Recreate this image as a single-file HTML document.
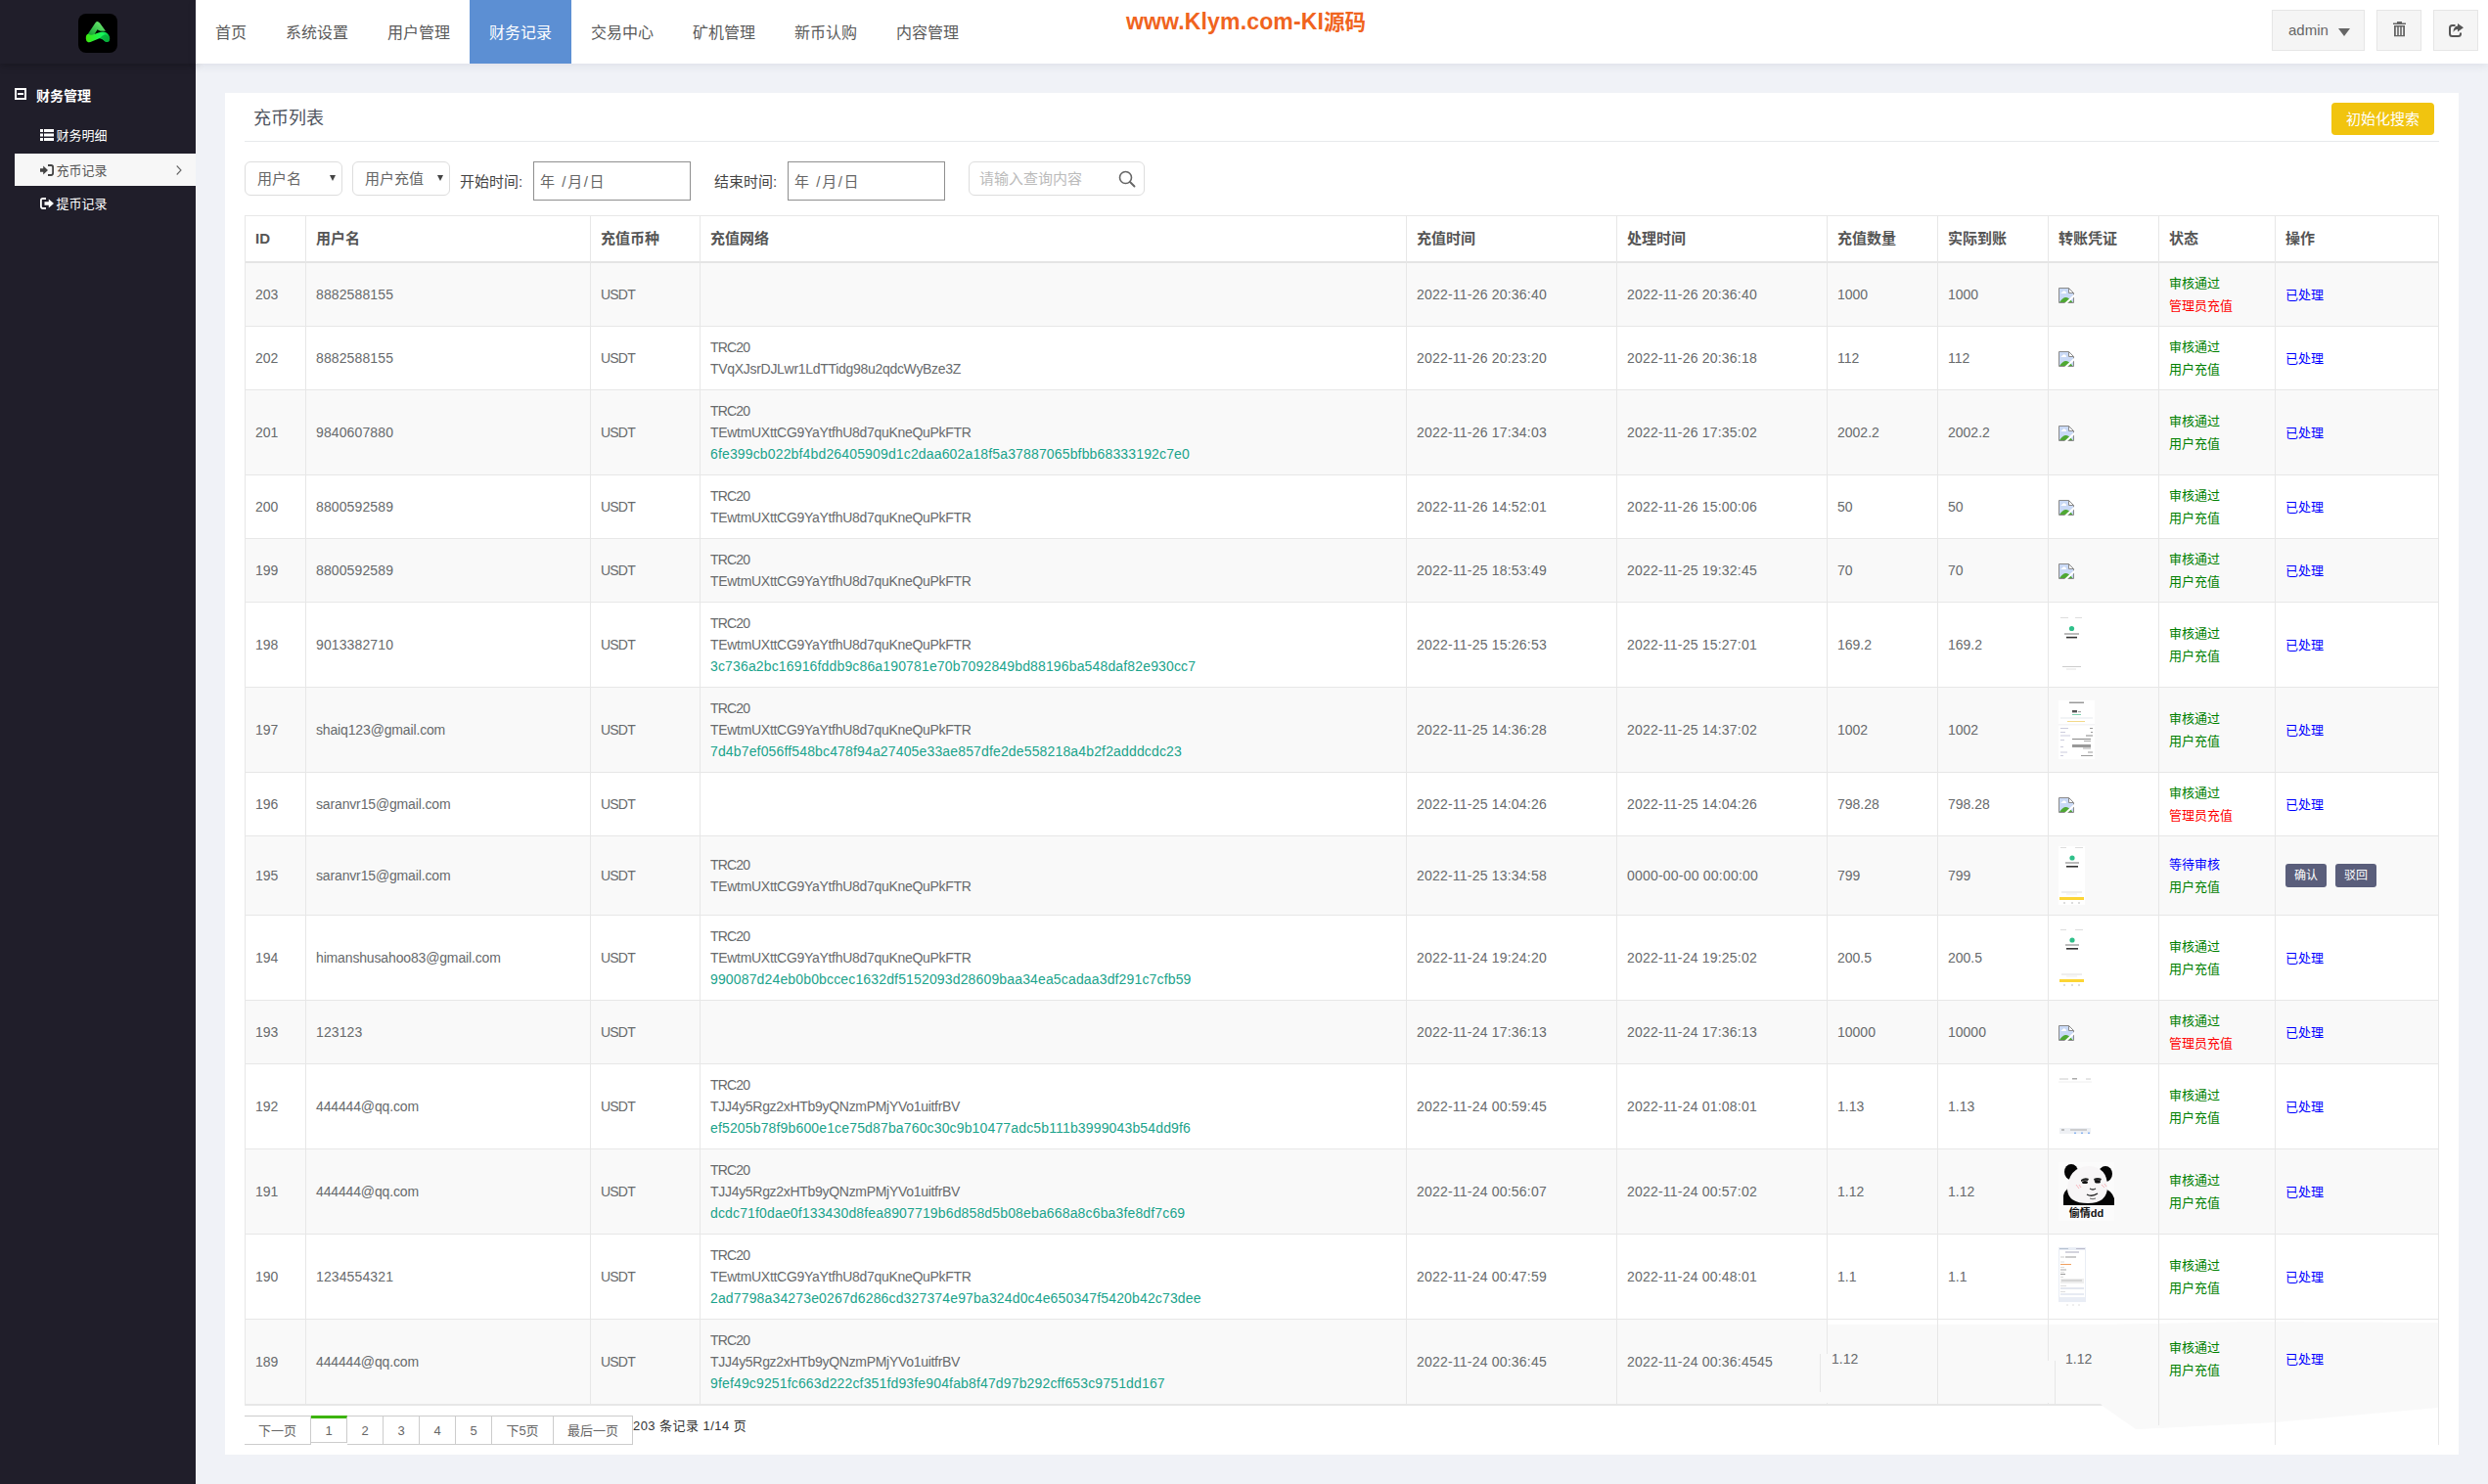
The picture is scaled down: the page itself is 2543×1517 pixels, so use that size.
<!DOCTYPE html>
<html lang="zh-CN">
<head>
<meta charset="utf-8">
<title>充币列表</title>
<style>
*{box-sizing:border-box;}
html,body{margin:0;padding:0;}
body{width:2543px;height:1517px;overflow:hidden;position:relative;background:#f0f2f7;font-family:"Liberation Sans","Noto Sans CJK SC",sans-serif;font-size:14px;color:#676a6c;}
a{text-decoration:none;color:inherit;}
#side{position:absolute;left:0;top:0;width:200px;height:1517px;background:#201e2a;}
#sidetop{position:absolute;left:0;top:0;width:200px;height:65px;background:#201e2a;box-shadow:0 2px 8px rgba(0,0,0,.25);}
#logo{position:absolute;left:80px;top:14px;width:40px;height:40px;border-radius:8px;background:#000;overflow:hidden;}
#head{position:absolute;left:200px;top:0;width:2343px;height:65px;background:#fff;box-shadow:0 2px 9px rgba(60,70,100,.10);}
#nav{position:absolute;left:0;top:0;height:65px;display:flex;}
#nav a{display:block;height:65px;line-height:68px;padding:0 20px;font-size:16px;color:#5a5a5a;white-space:nowrap;}
#nav a.on{background:#5c8fd3;color:#fff;}
#wm{position:absolute;left:951px;top:9px;font-size:21.5px;font-weight:bold;color:#f0641e;white-space:nowrap;line-height:26px;}
#wm span{font-size:23px;letter-spacing:.15px;}
.hb{position:absolute;top:10px;height:42px;background:#f5f5f5;border:1px solid #e6e6e6;}
#hb1{left:2122px;width:95px;}
#hb1 span{position:absolute;left:16px;top:0;line-height:39px;font-size:15px;color:#666;}
#hb1 i{position:absolute;left:67px;top:18px;width:0;height:0;border-left:6px solid transparent;border-right:6px solid transparent;border-top:8px solid #666;}
#hb2{left:2229px;width:46px;}
#hb3{left:2287px;width:46px;}
.hb svg{position:absolute;}
/* sidebar menu */
#mh{position:absolute;left:0;top:80px;width:200px;height:35px;color:#fff;font-weight:bold;font-size:14px;line-height:35px;}
#mh i{position:absolute;left:15px;top:10px;width:12px;height:12px;border:2px solid #fff;}
#mh i:after{content:"";position:absolute;left:1px;top:3px;width:6px;height:2px;background:#fff;}
#mh span{position:absolute;left:37px;top:1px;}
.mi{position:absolute;left:15px;width:185px;height:33px;color:#fff;font-size:13px;line-height:33px;}
.mi span{position:absolute;left:42.5px;top:1px;}
.mi svg{position:absolute;left:26px;top:11px;}
.mi.on{background:#f7f7f7;color:#555;}
/* panel */
#panel{position:absolute;left:230px;top:95px;width:2283px;height:1392px;background:#fff;}
#ttl{position:absolute;left:29px;top:11px;font-size:18px;line-height:30px;color:#4f5560;}
#hr{position:absolute;left:20px;top:49px;width:2243px;height:1px;background:#e7eaec;}
#ybtn{position:absolute;left:2153px;top:10px;width:105px;height:33px;border-radius:4px;background:#f1c40f;color:#fff;font-size:15px;line-height:34px;text-align:center;}
.sel{position:absolute;top:70px;width:100px;height:35px;border:1px solid #ddd;border-radius:6px;background:#fff;font-size:15px;color:#666;line-height:33px;padding-left:12px;}
.sel i{position:absolute;right:6px;top:13px;width:0;height:0;border-left:3px solid transparent;border-right:3px solid transparent;border-top:6px solid #444;}
.lbl{position:absolute;top:76px;font-size:15px;line-height:30px;color:#444;white-space:nowrap;}
.dt{position:absolute;top:70px;width:161px;height:40px;border:1px solid #8f8f8f;background:#fff;font-size:15px;color:#666;line-height:40px;padding-left:6px;white-space:pre;letter-spacing:1.6px;}
#sch{position:absolute;left:760px;top:70px;width:180px;height:35px;border:1px solid #ddd;border-radius:6px;background:#fff;font-size:15px;color:#bbb;line-height:33px;padding-left:10px;}
#sch svg{position:absolute;left:152px;top:8px;}
/* table */
#tb{position:absolute;left:20px;top:125px;width:2243px;border-collapse:separate;border-spacing:0;table-layout:fixed;border-left:1px solid #e7e7e7;border-top:1px solid #e7e7e7;}
#tb th,#tb td{border-right:1px solid #e7e7e7;border-bottom:1px solid #e7e7e7;padding:0 10px;text-align:left;vertical-align:middle;line-height:22px;overflow:hidden;white-space:nowrap;}
#tb th{height:48px;border-bottom:2px solid #e4e4e4;font-size:15px;font-weight:bold;color:#555;}
#tb td{font-size:14px;color:#676a6c;}
#tb td.tm{letter-spacing:.21px;}
#tb td.cn{letter-spacing:-.8px;}
#tb td.ud{letter-spacing:.12px;}
#tb td.ue{letter-spacing:-.15px;}
.ad{letter-spacing:-.3px;}
.tr{letter-spacing:-.8px;}
#tb tr:nth-child(odd) td{background:#f9f9f9;}
#tb tr.last td{border-bottom:2px solid #e7e7e7;}
#tb tr.last td.up>*{position:relative;top:-3px;}
.hs{color:#1aa38b;letter-spacing:.15px;}
.g{color:#008000;font-size:13px;}
.r{color:#ff0000;font-size:13px;}
.b{color:#0000ff;font-size:13px;}
.bk{display:block;margin-top:2px;}
.th{display:block;}
.sb{display:inline-block;width:42px;height:24px;border-radius:3px;background:#5a5e7b;color:#fff;font-size:12px;line-height:24px;text-align:center;vertical-align:middle;}
.sb2{margin-left:9px;}
/* pager */
#pg{position:absolute;left:20px;top:1352px;height:30px;display:flex;font-size:13px;color:#666;}
#pg a{display:block;height:30px;border:1px solid #ccc;border-left:none;line-height:30px;text-align:center;}
#pg a.cur{height:28px;border-top:3px solid #3cb40a;line-height:26px;}
#pg span{line-height:22px;color:#333;margin-left:0;letter-spacing:.45px;white-space:nowrap;font-size:13px;}
</style>
</head>
<body>
<div id="side">
  <div id="mh"><i></i><span>财务管理</span></div>
  <a class="mi" style="top:121px"><svg width="14" height="12" viewBox="0 0 14 12"><path fill="#fff" d="M0 0h3v3H0zM4 0h10v3H4zM0 4.5h3v3H0zM4 4.5h10v3H4zM0 9h3v3H0zM4 9h10v3H4z"/></svg><span>财务明细</span></a>
  <a class="mi on" style="top:157px"><svg width="14" height="12" viewBox="0 0 14 12"><path fill="#444" d="M0 4.200h3.200V1.600L8 6L3.200 10.400V7.800H0z"/><path fill="none" stroke="#444" stroke-width="1.8" d="M8 1h3.2q1.9 0 1.9 1.9v6.2q0 1.9-1.9 1.9H8"/></svg><span>充币记录</span><svg style="left:165px;top:12px" width="6" height="10" viewBox="0 0 6 10"><path d="M0.7 0.5L5 5L0.7 9.5" fill="none" stroke="#666" stroke-width="1.1"/></svg></a>
  <a class="mi" style="top:191px"><svg width="14" height="12" viewBox="0 0 14 12"><path fill="none" stroke="#fff" stroke-width="1.8" d="M6 1H2.8Q.9 1 .9 2.9v6.2Q.9 11 2.8 11H6"/><path fill="#fff" d="M4.500 4.200h4.300V1.600L14 6L8.800 10.400V7.800H4.500z"/></svg><span>提币记录</span></a>
</div>
<div id="sidetop">
  <div id="logo"><svg width="40" height="40" viewBox="0 0 40 40"><defs><linearGradient id="lg1" x1="0" y1="1" x2="1" y2="0"><stop offset="0" stop-color="#0a9a2c"/><stop offset="1" stop-color="#7bf57a"/></linearGradient><linearGradient id="lg2" x1="0" y1="0" x2="1" y2="0"><stop offset="0" stop-color="#3ee60c"/><stop offset=".7" stop-color="#16f55e"/><stop offset="1" stop-color="#06b83c"/></linearGradient></defs><path d="M9 22L17.5 9.300Q19.500 6.500 22 9.500L28 17.800H22.500L19.500 16.200L16 22Z" fill="url(#lg1)"/><path d="M7.800 25.400Q7.600 21.500 10 20.800Q12.500 22 15 21.500Q19 20 23 18.800Q26.500 18 28.500 19.300Q32 21.500 32.200 25.500Q32 29 29 29Q27 28.500 25.600 26.800Q23.500 24.800 21.500 25.200Q18 26.500 14.200 28.300Q11.500 29.600 9.800 29Q7.900 28 7.800 25.400Z" fill="url(#lg2)"/><path d="M22 25.100Q25 21 28 21.500Q31 22.500 32.200 25.500Q32 29 29 29Q27 28.500 25.600 26.800Q23.500 24.800 22 25.100Z" fill="#05a536" opacity=".75"/></svg></div>
</div>
<div id="head">
  <div id="nav"><a>首页</a><a>系统设置</a><a>用户管理</a><a class="on">财务记录</a><a>交易中心</a><a>矿机管理</a><a>新币认购</a><a>内容管理</a></div>
  <div id="wm"><span>www.Klym.com-KI</span>源码</div>
  <div class="hb" id="hb1"><span>admin</span><i></i></div>
  <div class="hb" id="hb2"><svg style="left:16px;top:11px" width="13" height="16" viewBox="0 0 13 16"><path fill="#666" d="M4 0h5v1.500h4V3H0V1.500h4zM1 4h11v11.300H1zM2.800 5.500v8.500h1.400V5.500zM5.800 5.500v8.500h1.400V5.500zM8.800 5.500v8.500h1.400V5.500z" fill-rule="evenodd"/></svg></div>
  <div class="hb" id="hb3"><svg style="left:15px;top:13px" width="15" height="14" viewBox="0 0 15 14"><path fill="none" stroke="#555" stroke-width="2" d="M6.500 2H3.500Q1 2 1 4.500v6Q1 13 3.500 13h6Q12 13 12 10.500V9.500"/><path fill="#555" d="M9 0l6 4.200L9 8.500V6Q6 6 4.500 9Q4.500 3 9 2.500z"/></svg></div>
</div>
<div id="panel">
  <div id="ttl">充币列表</div>
  <div id="ybtn">初始化搜索</div>
  <div id="hr"></div>
  <div class="sel" style="left:20px">用户名<i></i></div>
  <div class="sel" style="left:130px">用户充值<i></i></div>
  <div class="lbl" style="left:240px">开始时间:</div>
  <div class="dt" style="left:315px">年 /月/日</div>
  <div class="lbl" style="left:500px">结束时间:</div>
  <div class="dt" style="left:575px">年 /月/日</div>
  <div id="sch">请输入查询内容<svg width="18" height="18" viewBox="0 0 18 18"><circle cx="7.500" cy="7.500" r="6" fill="none" stroke="#666" stroke-width="1.600"/><path d="M12 12l4.500 4.500" stroke="#666" stroke-width="1.900" stroke-linecap="round"/></svg></div>
  <table id="tb">
    <colgroup><col style="width:62px"><col style="width:291px"><col style="width:112px"><col style="width:722px"><col style="width:215px"><col style="width:215px"><col style="width:113px"><col style="width:113px"><col style="width:113px"><col style="width:119px"><col style="width:167px"></colgroup>
    <thead><tr><th>ID</th><th>用户名</th><th>充值币种</th><th>充值网络</th><th>充值时间</th><th>处理时间</th><th>充值数量</th><th>实际到账</th><th>转账凭证</th><th>状态</th><th>操作</th></tr></thead>
    <tbody>
<tr style="height:65px"><td>203</td><td class="ud">8882588155</td><td class="cn">USDT</td><td class="net"></td><td class="tm">2022-11-26 20:36:40</td><td class="tm">2022-11-26 20:36:40</td><td>1000</td><td>1000</td><td class="im"><svg class="bk" width="17" height="17" viewBox="0 0 17 17"><path d="M1 1H10.500L15 5.500V15H1Z" fill="#c9d9f6"/><path d="M2.200 5.900L5 3.500Q6 2.900 6.800 3.800Q8.100 4.100 8 5.900Z" fill="#fff"/><path d="M1 15Q5 9.300 8 10Q11 10.400 14.500 15Z" fill="#4fa834"/><path d="M10.500 0.500V5.500H15.500" fill="#fff" stroke="#8a8a8a" stroke-width="1"/><path d="M0.500 15.500V0.500H10.500L15.500 5.500V15.500Z" fill="none" stroke="#8a8a8a" stroke-width="1"/><path d="M17 7.300L6.800 16.800" stroke="#fff" stroke-width="2"/></svg></td><td class="st"><span class="g">审核通过</span><br><span class="r">管理员充值</span></td><td class="ac"><span class="b">已处理</span></td></tr>
<tr style="height:65px"><td>202</td><td class="ud">8882588155</td><td class="cn">USDT</td><td class="net"><span class="tr">TRC20</span><br><span class="ad">TVqXJsrDJLwr1LdTTidg98u2qdcWyBze3Z</span></td><td class="tm">2022-11-26 20:23:20</td><td class="tm">2022-11-26 20:36:18</td><td>112</td><td>112</td><td class="im"><svg class="bk" width="17" height="17" viewBox="0 0 17 17"><path d="M1 1H10.500L15 5.500V15H1Z" fill="#c9d9f6"/><path d="M2.200 5.900L5 3.500Q6 2.900 6.800 3.800Q8.100 4.100 8 5.900Z" fill="#fff"/><path d="M1 15Q5 9.300 8 10Q11 10.400 14.500 15Z" fill="#4fa834"/><path d="M10.500 0.500V5.500H15.500" fill="#fff" stroke="#8a8a8a" stroke-width="1"/><path d="M0.500 15.500V0.500H10.500L15.500 5.500V15.500Z" fill="none" stroke="#8a8a8a" stroke-width="1"/><path d="M17 7.300L6.800 16.800" stroke="#fff" stroke-width="2"/></svg></td><td class="st"><span class="g">审核通过</span><br><span class="g">用户充值</span></td><td class="ac"><span class="b">已处理</span></td></tr>
<tr style="height:87px"><td>201</td><td class="ud">9840607880</td><td class="cn">USDT</td><td class="net"><span class="tr">TRC20</span><br><span class="ad">TEwtmUXttCG9YaYtfhU8d7quKneQuPkFTR</span><br><span class="hs">6fe399cb022bf4bd26405909d1c2daa602a18f5a37887065bfbb68333192c7e0</span></td><td class="tm">2022-11-26 17:34:03</td><td class="tm">2022-11-26 17:35:02</td><td>2002.2</td><td>2002.2</td><td class="im"><svg class="bk" width="17" height="17" viewBox="0 0 17 17"><path d="M1 1H10.500L15 5.500V15H1Z" fill="#c9d9f6"/><path d="M2.200 5.900L5 3.500Q6 2.900 6.800 3.800Q8.100 4.100 8 5.900Z" fill="#fff"/><path d="M1 15Q5 9.300 8 10Q11 10.400 14.500 15Z" fill="#4fa834"/><path d="M10.500 0.500V5.500H15.500" fill="#fff" stroke="#8a8a8a" stroke-width="1"/><path d="M0.500 15.500V0.500H10.500L15.500 5.500V15.500Z" fill="none" stroke="#8a8a8a" stroke-width="1"/><path d="M17 7.300L6.800 16.800" stroke="#fff" stroke-width="2"/></svg></td><td class="st"><span class="g">审核通过</span><br><span class="g">用户充值</span></td><td class="ac"><span class="b">已处理</span></td></tr>
<tr style="height:65px"><td>200</td><td class="ud">8800592589</td><td class="cn">USDT</td><td class="net"><span class="tr">TRC20</span><br><span class="ad">TEwtmUXttCG9YaYtfhU8d7quKneQuPkFTR</span></td><td class="tm">2022-11-26 14:52:01</td><td class="tm">2022-11-26 15:00:06</td><td>50</td><td>50</td><td class="im"><svg class="bk" width="17" height="17" viewBox="0 0 17 17"><path d="M1 1H10.500L15 5.500V15H1Z" fill="#c9d9f6"/><path d="M2.200 5.900L5 3.500Q6 2.900 6.800 3.800Q8.100 4.100 8 5.900Z" fill="#fff"/><path d="M1 15Q5 9.300 8 10Q11 10.400 14.500 15Z" fill="#4fa834"/><path d="M10.500 0.500V5.500H15.500" fill="#fff" stroke="#8a8a8a" stroke-width="1"/><path d="M0.500 15.500V0.500H10.500L15.500 5.500V15.500Z" fill="none" stroke="#8a8a8a" stroke-width="1"/><path d="M17 7.300L6.800 16.800" stroke="#fff" stroke-width="2"/></svg></td><td class="st"><span class="g">审核通过</span><br><span class="g">用户充值</span></td><td class="ac"><span class="b">已处理</span></td></tr>
<tr style="height:65px"><td>199</td><td class="ud">8800592589</td><td class="cn">USDT</td><td class="net"><span class="tr">TRC20</span><br><span class="ad">TEwtmUXttCG9YaYtfhU8d7quKneQuPkFTR</span></td><td class="tm">2022-11-25 18:53:49</td><td class="tm">2022-11-25 19:32:45</td><td>70</td><td>70</td><td class="im"><svg class="bk" width="17" height="17" viewBox="0 0 17 17"><path d="M1 1H10.500L15 5.500V15H1Z" fill="#c9d9f6"/><path d="M2.200 5.900L5 3.500Q6 2.900 6.800 3.800Q8.100 4.100 8 5.900Z" fill="#fff"/><path d="M1 15Q5 9.300 8 10Q11 10.400 14.500 15Z" fill="#4fa834"/><path d="M10.500 0.500V5.500H15.500" fill="#fff" stroke="#8a8a8a" stroke-width="1"/><path d="M0.500 15.500V0.500H10.500L15.500 5.500V15.500Z" fill="none" stroke="#8a8a8a" stroke-width="1"/><path d="M17 7.300L6.800 16.800" stroke="#fff" stroke-width="2"/></svg></td><td class="st"><span class="g">审核通过</span><br><span class="g">用户充值</span></td><td class="ac"><span class="b">已处理</span></td></tr>
<tr style="height:87px"><td>198</td><td class="ud">9013382710</td><td class="cn">USDT</td><td class="net"><span class="tr">TRC20</span><br><span class="ad">TEwtmUXttCG9YaYtfhU8d7quKneQuPkFTR</span><br><span class="hs">3c736a2bc16916fddb9c86a190781e70b7092849bd88196ba548daf82e930cc7</span></td><td class="tm">2022-11-25 15:26:53</td><td class="tm">2022-11-25 15:27:01</td><td>169.2</td><td>169.2</td><td class="im"><svg class="th" width="26" height="60" viewBox="0 0 26 60"><rect width="26" height="60" fill="#fff"/><rect x="2" y="2" width="8" height="1" fill="#ddd"/><rect x="17" y="2" width="7" height="1" fill="#ddd"/><circle cx="13.5" cy="13.5" r="2.6" fill="#2fc08a"/><rect x="6" y="18.500" width="15" height="1" fill="#777"/><rect x="8" y="21.800" width="11" height="1.600" fill="#333"/><rect x="4" y="52" width="19" height="1" fill="#ccc"/><rect x="8" y="54.5" width="10" height="1" fill="#e4e4e4"/></svg></td><td class="st"><span class="g">审核通过</span><br><span class="g">用户充值</span></td><td class="ac"><span class="b">已处理</span></td></tr>
<tr style="height:87px"><td>197</td><td class="ue">shaiq123@gmail.com</td><td class="cn">USDT</td><td class="net"><span class="tr">TRC20</span><br><span class="ad">TEwtmUXttCG9YaYtfhU8d7quKneQuPkFTR</span><br><span class="hs">7d4b7ef056ff548bc478f94a27405e33ae857dfe2de558218a4b2f2adddcdc23</span></td><td class="tm">2022-11-25 14:36:28</td><td class="tm">2022-11-25 14:37:02</td><td>1002</td><td>1002</td><td class="im"><svg class="th" width="37" height="60" viewBox="0 0 37 60"><rect width="37" height="60" fill="#fff"/><rect x="11" y="1.5" width="15" height="1.5" fill="#999"/><rect x="14" y="10" width="5" height="2.4" fill="#555"/><rect x="20" y="11" width="3" height="1.2" fill="#aaa"/><rect x="14" y="14" width="9" height="1" fill="#7fd3b0"/><rect x="2" y="17.5" width="33" height="1" fill="#e6e9ee"/><rect x="9" y="21" width="18" height="1" fill="#f3d98a"/><rect x="0" y="24" width="37" height="1.5" fill="#f4f4f6"/><rect x="2" y="28" width="8" height="1" fill="#ccd"/><rect x="32" y="28" width="3" height="1" fill="#999"/><rect x="2" y="32" width="5" height="1" fill="#ccd"/><rect x="33" y="32" width="2" height="1" fill="#999"/><rect x="2" y="35.5" width="10" height="1" fill="#ccd"/><rect x="28" y="35.5" width="7" height="1" fill="#888"/><rect x="2" y="40" width="4" height="1" fill="#ccd"/><rect x="14" y="39" width="19" height="1" fill="#888"/><rect x="26" y="41" width="7" height="1" fill="#aaa"/><rect x="2" y="47" width="3" height="1" fill="#ccd"/><rect x="14" y="45" width="19" height="3" fill="#999"/><rect x="25" y="48.5" width="8" height="1" fill="#aaa"/><rect x="2" y="52.5" width="7" height="1" fill="#ccd"/><rect x="30" y="52.5" width="5" height="1" fill="#999"/><rect x="2" y="56" width="3" height="1" fill="#ccd"/><rect x="23" y="56" width="12" height="1" fill="#999"/></svg></td><td class="st"><span class="g">审核通过</span><br><span class="g">用户充值</span></td><td class="ac"><span class="b">已处理</span></td></tr>
<tr style="height:65px"><td>196</td><td class="ue">saranvr15@gmail.com</td><td class="cn">USDT</td><td class="net"></td><td class="tm">2022-11-25 14:04:26</td><td class="tm">2022-11-25 14:04:26</td><td>798.28</td><td>798.28</td><td class="im"><svg class="bk" width="17" height="17" viewBox="0 0 17 17"><path d="M1 1H10.500L15 5.500V15H1Z" fill="#c9d9f6"/><path d="M2.200 5.900L5 3.500Q6 2.900 6.800 3.800Q8.100 4.100 8 5.900Z" fill="#fff"/><path d="M1 15Q5 9.300 8 10Q11 10.400 14.500 15Z" fill="#4fa834"/><path d="M10.500 0.500V5.500H15.500" fill="#fff" stroke="#8a8a8a" stroke-width="1"/><path d="M0.500 15.500V0.500H10.500L15.500 5.500V15.500Z" fill="none" stroke="#8a8a8a" stroke-width="1"/><path d="M17 7.300L6.800 16.800" stroke="#fff" stroke-width="2"/></svg></td><td class="st"><span class="g">审核通过</span><br><span class="r">管理员充值</span></td><td class="ac"><span class="b">已处理</span></td></tr>
<tr style="height:81px"><td>195</td><td class="ue">saranvr15@gmail.com</td><td class="cn">USDT</td><td class="net"><span class="tr">TRC20</span><br><span class="ad">TEwtmUXttCG9YaYtfhU8d7quKneQuPkFTR</span></td><td class="tm">2022-11-25 13:34:58</td><td class="tm">0000-00-00 00:00:00</td><td>799</td><td>799</td><td class="im"><svg class="th" width="27" height="60" viewBox="0 0 27 60"><rect width="27" height="60" fill="#fff"/><rect x="2" y="1" width="6" height="1" fill="#ddd"/><rect x="17" y="1" width="8" height="1" fill="#ddd"/><circle cx="14" cy="12" r="2.6" fill="#2fc08a"/><rect x="7" y="16.500" width="14" height="1" fill="#777"/><rect x="8" y="20" width="12" height="1.600" fill="#333"/><rect x="3" y="46.5" width="21" height="1" fill="#ddd"/><rect x="8" y="48.5" width="11" height="1" fill="#eee"/><rect x="1" y="52" width="25" height="3" fill="#fcd535"/><rect x="5" y="57.5" width="2" height="1" fill="#bbb"/><rect x="13" y="57.5" width="2" height="1" fill="#bbb"/><rect x="20" y="57.5" width="2" height="1" fill="#bbb"/></svg></td><td class="st"><span class="b">等待审核</span><br><span class="g">用户充值</span></td><td class="ac"><a class="sb">确认</a><a class="sb sb2">驳回</a></td></tr>
<tr style="height:87px"><td>194</td><td class="ue">himanshusahoo83@gmail.com</td><td class="cn">USDT</td><td class="net"><span class="tr">TRC20</span><br><span class="ad">TEwtmUXttCG9YaYtfhU8d7quKneQuPkFTR</span><br><span class="hs">990087d24eb0b0bccec1632df5152093d28609baa34ea5cadaa3df291c7cfb59</span></td><td class="tm">2022-11-24 19:24:20</td><td class="tm">2022-11-24 19:25:02</td><td>200.5</td><td>200.5</td><td class="im"><svg class="th" width="27" height="60" viewBox="0 0 27 60"><rect width="27" height="60" fill="#fff"/><rect x="2" y="1" width="6" height="1" fill="#ddd"/><rect x="17" y="1" width="8" height="1" fill="#ddd"/><circle cx="14" cy="12" r="2.6" fill="#2fc08a"/><rect x="7" y="16.500" width="14" height="1" fill="#777"/><rect x="8" y="20" width="12" height="1.600" fill="#333"/><rect x="3" y="46.5" width="21" height="1" fill="#ddd"/><rect x="8" y="48.5" width="11" height="1" fill="#eee"/><rect x="1" y="52" width="25" height="3" fill="#fcd535"/><rect x="5" y="57.5" width="2" height="1" fill="#bbb"/><rect x="13" y="57.5" width="2" height="1" fill="#bbb"/><rect x="20" y="57.5" width="2" height="1" fill="#bbb"/></svg></td><td class="st"><span class="g">审核通过</span><br><span class="g">用户充值</span></td><td class="ac"><span class="b">已处理</span></td></tr>
<tr style="height:65px"><td>193</td><td class="ud">123123</td><td class="cn">USDT</td><td class="net"></td><td class="tm">2022-11-24 17:36:13</td><td class="tm">2022-11-24 17:36:13</td><td>10000</td><td>10000</td><td class="im"><svg class="bk" width="17" height="17" viewBox="0 0 17 17"><path d="M1 1H10.500L15 5.500V15H1Z" fill="#c9d9f6"/><path d="M2.200 5.900L5 3.500Q6 2.900 6.800 3.800Q8.100 4.100 8 5.900Z" fill="#fff"/><path d="M1 15Q5 9.300 8 10Q11 10.400 14.500 15Z" fill="#4fa834"/><path d="M10.500 0.500V5.500H15.500" fill="#fff" stroke="#8a8a8a" stroke-width="1"/><path d="M0.500 15.500V0.500H10.500L15.500 5.500V15.500Z" fill="none" stroke="#8a8a8a" stroke-width="1"/><path d="M17 7.300L6.800 16.800" stroke="#fff" stroke-width="2"/></svg></td><td class="st"><span class="g">审核通过</span><br><span class="r">管理员充值</span></td><td class="ac"><span class="b">已处理</span></td></tr>
<tr style="height:87px"><td>192</td><td class="ue">444444@qq.com</td><td class="cn">USDT</td><td class="net"><span class="tr">TRC20</span><br><span class="ad">TJJ4y5Rgz2xHTb9yQNzmPMjYVo1uitfrBV</span><br><span class="hs">ef5205b78f9b600e1ce75d87ba760c30c9b10477adc5b111b3999043b54dd9f6</span></td><td class="tm">2022-11-24 00:59:45</td><td class="tm">2022-11-24 01:08:01</td><td>1.13</td><td>1.13</td><td class="im"><svg class="th" width="34" height="60" viewBox="0 0 34 60"><rect width="34" height="60" fill="#fff"/><rect x="1" y="1.5" width="9" height="1" fill="#ccc"/><rect x="14" y="1" width="5" height="1.5" fill="#aaa"/><rect x="28" y="1.5" width="5" height="1" fill="#ccc"/><rect x="0" y="4.5" width="34" height="1" fill="#f0f0f0"/><rect x="1" y="52" width="32" height="6" fill="#eef0f4"/><rect x="3" y="53.5" width="3" height="1" fill="#888"/><rect x="12" y="53.5" width="17" height="1" fill="#aaa"/><rect x="16" y="56.5" width="2" height="1.5" fill="#8ab4f0"/><rect x="23" y="56.5" width="2" height="1.5" fill="#8ab4f0"/><rect x="30" y="56.5" width="2" height="1.5" fill="#8ab4f0"/></svg></td><td class="st"><span class="g">审核通过</span><br><span class="g">用户充值</span></td><td class="ac"><span class="b">已处理</span></td></tr>
<tr style="height:87px"><td>191</td><td class="ue">444444@qq.com</td><td class="cn">USDT</td><td class="net"><span class="tr">TRC20</span><br><span class="ad">TJJ4y5Rgz2xHTb9yQNzmPMjYVo1uitfrBV</span><br><span class="hs">dcdc71f0dae0f133430d8fea8907719b6d858d5b08eba668a8c6ba3fe8df7c69</span></td><td class="tm">2022-11-24 00:56:07</td><td class="tm">2022-11-24 00:57:02</td><td>1.12</td><td>1.12</td><td class="im"><svg class="th" width="57" height="60" viewBox="0 0 57 60"><rect width="57" height="60" fill="#fbfbfb"/><path d="M5 44V34Q6 28 13 26H44Q54 28 57 37V44Z" fill="#050505"/><ellipse cx="13" cy="10" rx="7" ry="8" fill="#050505"/><ellipse cx="48" cy="12" rx="7" ry="8" fill="#050505"/><path d="M9 28Q10 5 31 4Q50 5 50 25Q50 42 30 42Q10 42 9 28Z" fill="#f7f5f6"/><path d="M23 18q4-3 8-1l-1 2q-4-1-7 1z" fill="#222"/><path d="M36 17q4-2 8 0l-1 2q-3-1-6 1z" fill="#222"/><ellipse cx="27" cy="20.500" rx="3" ry="1.600" fill="#111"/><ellipse cx="40" cy="20" rx="3" ry="1.600" fill="#111"/><path d="M32 27q3 2 6 0" stroke="#333" stroke-width="1.3" fill="none"/><path d="M29 33q5 3 11-1" stroke="#222" stroke-width="1.4" fill="none"/><path d="M32 37q3 1.5 6 0" stroke="#666" stroke-width="1" fill="none"/><path d="M18 23l3 4M21 23l2 3M44 23l3 3M47 22l2 3" stroke="#f6a8b0" stroke-width="0.8"/><text x="28.5" y="55.5" text-anchor="middle" font-family="Liberation Sans, Noto Sans CJK SC, sans-serif" font-size="11" font-weight="bold" fill="#111">偷情dd</text></svg></td><td class="st"><span class="g">审核通过</span><br><span class="g">用户充值</span></td><td class="ac"><span class="b">已处理</span></td></tr>
<tr style="height:87px"><td>190</td><td class="ud">1234554321</td><td class="cn">USDT</td><td class="net"><span class="tr">TRC20</span><br><span class="ad">TEwtmUXttCG9YaYtfhU8d7quKneQuPkFTR</span><br><span class="hs">2ad7798a34273e0267d6286cd327374e97ba324d0c4e650347f5420b42c73dee</span></td><td class="tm">2022-11-24 00:47:59</td><td class="tm">2022-11-24 00:48:01</td><td>1.1</td><td>1.1</td><td class="im"><svg class="th" width="28" height="60" viewBox="0 0 28 60"><rect width="28" height="60" fill="#fff"/><rect x="0" y="0" width="28" height="56" fill="#e9edf5"/><rect x="1" y="3" width="26" height="48" fill="#fff"/><rect x="1" y="1" width="9" height="1" fill="#b5c0d0"/><rect x="18" y="1" width="9" height="1" fill="#bbc"/><rect x="7" y="4.5" width="14" height="1" fill="#aab"/><rect x="2" y="9.5" width="4" height="1" fill="#ccc"/><rect x="7" y="9.5" width="11" height="1" fill="#999"/><rect x="2" y="14.5" width="4" height="1" fill="#ddd"/><rect x="2" y="17" width="11" height="1" fill="#f0a060"/><rect x="2" y="20" width="4" height="1" fill="#ddd"/><rect x="2" y="22.5" width="6" height="1" fill="#aaa"/><rect x="2" y="25" width="4" height="1" fill="#ddd"/><rect x="2" y="27" width="5" height="1" fill="#999"/><rect x="2" y="30" width="3" height="1" fill="#ddd"/><rect x="2" y="32" width="24" height="5" fill="#eee"/><rect x="3" y="33.5" width="21" height="1" fill="#bbb"/><rect x="2" y="39" width="6" height="1" fill="#ddd"/><rect x="2" y="41.5" width="24" height="1" fill="#c8d0e0"/><rect x="2" y="45" width="5" height="1" fill="#ddd"/><rect x="2" y="47.5" width="24" height="1" fill="#d0d8e8"/><rect x="8" y="58.5" width="2" height="1" fill="#e0e0e0"/><rect x="14" y="58.5" width="2" height="1" fill="#e0e0e0"/><rect x="20" y="58.5" width="2" height="1" fill="#e0e0e0"/></svg></td><td class="st"><span class="g">审核通过</span><br><span class="g">用户充值</span></td><td class="ac"><span class="b">已处理</span></td></tr>
<tr style="height:88px" class="last"><td>189</td><td class="ue">444444@qq.com</td><td class="cn">USDT</td><td class="net"><span class="tr">TRC20</span><br><span class="ad">TJJ4y5Rgz2xHTb9yQNzmPMjYVo1uitfrBV</span><br><span class="hs">9fef49c9251fc663d222cf351fd93fe904fab8f47d97b292cff653c9751dd167</span></td><td class="tm">2022-11-24 00:36:45</td><td class="tm">2022-11-24 00:36:4545</td><td><span style="position:relative;left:-6px;top:-3px">1.12</span></td><td></td><td class="im"><span style="position:relative;left:7px;top:-3px">1.12</span></td><td class="st"><div style="position:relative;top:-3px"><span class="g">审核通过</span><br><span class="g">用户充值</span></div></td><td class="ac"><div style="position:relative;top:-3px"><span class="b">已处理</span></div></td></tr>
    </tbody>
  </table>
  <div id="pg"><a style="width:68px">下一页</a><a class="cur" style="width:37px">1</a><a style="width:37px">2</a><a style="width:37px">3</a><a style="width:37px">4</a><a style="width:37px">5</a><a style="width:63px">下5页</a><a style="width:81px">最后一页</a><span>203 条记录 1/14 页</span></div>
</div>
<svg id="gl" width="703" height="160" viewBox="0 0 703 160" style="position:absolute;left:1840px;top:1340px"><path d="M28 9 L652 9 L652 12 L460 11 L310 14 L28 14 Z" fill="#fff"/><path d="M306 94 L652 94 L652 99 L485 114 L366 120 L343 121 L310 98 Z" fill="#f9f9f9"/><path d="M27.5 44 V94 M253.5 51 V94" stroke="#f9f9f9" stroke-width="1"/><path d="M20.5 44 V83 M260.5 51 V95 M27.5 9 V14 M140.5 9 V14 M253.5 9 V14 M366.5 9 V117 M485.5 9 V137 M652.5 9 V137" stroke="#e7e7e7" stroke-width="1" fill="none"/></svg>
</body>
</html>
